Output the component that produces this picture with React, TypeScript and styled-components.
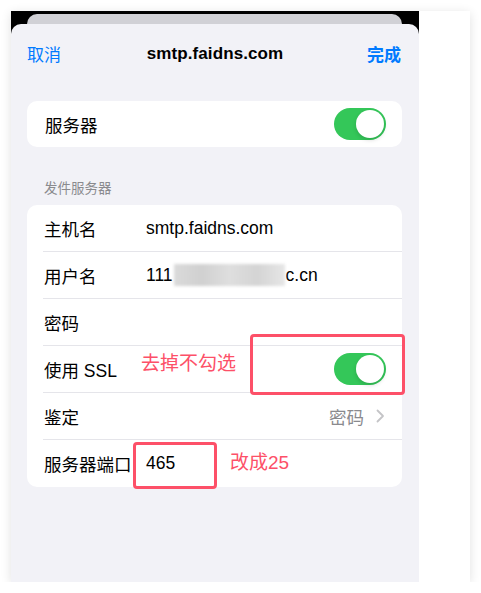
import React from "react";
import styled, { createGlobalStyle } from "styled-components";

const GlobalStyle = createGlobalStyle`
  html, body {
    margin: 0;
    padding: 0;
    background: #ffffff;
  }
  body {
    font-family: "Liberation Sans", "Noto Sans CJK SC", Arial, sans-serif;
    -webkit-font-smoothing: antialiased;
  }
`;

type RowType = {
  label: string;
  value?: React.ReactNode;
  toggle?: boolean;
  detail?: string;
};

function App() {
  const rows: RowType[] = [
    { label: "主机名", value: "smtp.faidns.com" },
    {
      label: "用户名",
      value: (
        <>
          111
          <Blur />
          c.cn
        </>
      ),
    },
    { label: "密码" },
    { label: "使用 SSL", toggle: true },
    { label: "鉴定", detail: "密码" },
    { label: "服务器端口", value: "465" },
  ];

  return (
    <>
      <GlobalStyle />
      <Frame>
        <Phone>
          <BackSheet />
          <Sheet>
            <NavBar>
              <NavButton>取消</NavButton>
              <NavTitle>smtp.faidns.com</NavTitle>
              <NavButton $bold>完成</NavButton>
            </NavBar>

            <Card $top={19}>
              <SingleRow>
                <Label>服务器</Label>
                <Toggle />
              </SingleRow>
            </Card>

            <SectionHeader>发件服务器</SectionHeader>

            <Card $top={0}>
              {rows.map((row, index) => (
                <Row key={row.label}>
                  <RowInner $last={index === rows.length - 1}>
                    <Label $fixed={!!row.value || index < 3}>{row.label}</Label>
                    {row.value ? <Value>{row.value}</Value> : null}
                    {row.toggle ? <Toggle /> : null}
                    {row.detail ? (
                      <Detail>
                        {row.detail}
                        <svg width="9" height="14" viewBox="0 0 9 14">
                          <polyline
                            points="1.5,1.5 7,7 1.5,12.5"
                            fill="none"
                            stroke="#c4c4c7"
                            strokeWidth="1.8"
                            strokeLinecap="round"
                            strokeLinejoin="round"
                          />
                        </svg>
                      </Detail>
                    ) : null}
                  </RowInner>
                </Row>
              ))}

              <Note style={{ left: 114, top: 147 }}>去掉不勾选</Note>
              <Marker style={{ left: 223, top: 129, width: 155, height: 61 }} />
              <Marker style={{ left: 106, top: 237, width: 84, height: 47 }} />
              <Note style={{ left: 203, top: 246 }}>改成25</Note>
            </Card>
          </Sheet>
        </Phone>
        <Side />
      </Frame>
    </>
  );
}

function Toggle() {
  return (
    <Switch>
      <Knob />
    </Switch>
  );
}

export default App;

const Frame = styled.div`
  margin: 11px 0 0 11px;
  width: 459px;
  height: 571px;
  display: flex;
  background: #ffffff;
  box-shadow: 0 2px 10px rgba(0, 0, 0, 0.12);
`;

const Phone = styled.div`
  width: 408px;
  display: flex;
  flex-direction: column;
  background: #000000;
`;

const Side = styled.div`
  flex: 1;
  background: #ffffff;
`;

const BackSheet = styled.div`
  height: 10px;
  margin: 3px 17px 0 16px;
  background: #d1d1d6;
  border-radius: 10px 10px 0 0;
`;

const Sheet = styled.div`
  flex: 1;
  background: #f2f2f7;
  border-radius: 10px 10px 0 0;
  padding: 0 17px 0 16px;
`;

const NavBar = styled.div`
  height: 58px;
  display: flex;
  align-items: center;
  justify-content: space-between;
  padding-right: 1px;
  padding-top: 1px;
  box-sizing: border-box;
`;

const NavButton = styled.span<{ $bold?: boolean }>`
  color: #007aff;
  font-size: 17px;
  font-weight: ${(p) => (p.$bold ? 700 : 400)};
`;

const NavTitle = styled.span`
  font-size: 17px;
  font-weight: 700;
  color: #000000;
  letter-spacing: 0.1px;
  margin-left: 2px;
`;

const Card = styled.div<{ $top: number }>`
  position: relative;
  background: #ffffff;
  border-radius: 10px;
  margin-top: ${(p) => p.$top}px;
`;

const SingleRow = styled.div`
  height: 46px;
  display: flex;
  align-items: center;
  justify-content: space-between;
  padding: 0 16px 0 17px;
`;

const SectionHeader = styled.div`
  padding: 33px 17px 7px;
  line-height: 18px;
  font-size: 13.5px;
  color: #8a8a8e;
`;

const Row = styled.div`
  padding-left: 16px;
`;

const RowInner = styled.div<{ $last?: boolean }>`
  height: 47px;
  box-sizing: border-box;
  display: flex;
  align-items: center;
  padding-right: 16px;
  border-bottom: ${(p) => (p.$last ? "none" : "1px solid #e5e5ea")};
`;

const Label = styled.span<{ $fixed?: boolean }>`
  font-size: 17.5px;
  color: #000000;
  padding-left: 1px;
  width: ${(p) => (p.$fixed ? "102px" : "auto")};
  flex: ${(p) => (p.$fixed ? "none" : "1")};
  white-space: nowrap;
`;

const Value = styled.span`
  font-size: 17.5px;
  color: #000000;
  display: flex;
  align-items: center;
  white-space: nowrap;
`;

const Blur = styled.span`
  display: inline-block;
  width: 111px;
  height: 22px;
  margin: 0 1px 0 1px;
  background: linear-gradient(
    90deg,
    #dadada 0%,
    #d0d0d0 25%,
    #dedede 50%,
    #d4d4d4 75%,
    #e6e6e6 100%
  );
  filter: blur(1.5px);
`;

const Detail = styled.span`
  display: flex;
  align-items: center;
  gap: 12px;
  font-size: 17.5px;
  color: #8a8a8e;
  margin-right: 1px;
`;

const Switch = styled.span`
  width: 52px;
  height: 32px;
  border-radius: 16px;
  background: #34c759;
  display: flex;
  align-items: center;
  justify-content: flex-end;
  padding: 0 2px;
  box-sizing: border-box;
`;

const Knob = styled.span`
  width: 28px;
  height: 28px;
  border-radius: 50%;
  background: #ffffff;
  box-shadow: 0 2px 4px rgba(0, 0, 0, 0.15);
`;

const Marker = styled.div`
  position: absolute;
  box-sizing: border-box;
  border: 3px solid #fd5068;
  border-radius: 4px;
  pointer-events: none;
`;

const Note = styled.span`
  position: absolute;
  line-height: 24px;
  font-size: 19px;
  color: #fd5068;
  white-space: nowrap;
`;
